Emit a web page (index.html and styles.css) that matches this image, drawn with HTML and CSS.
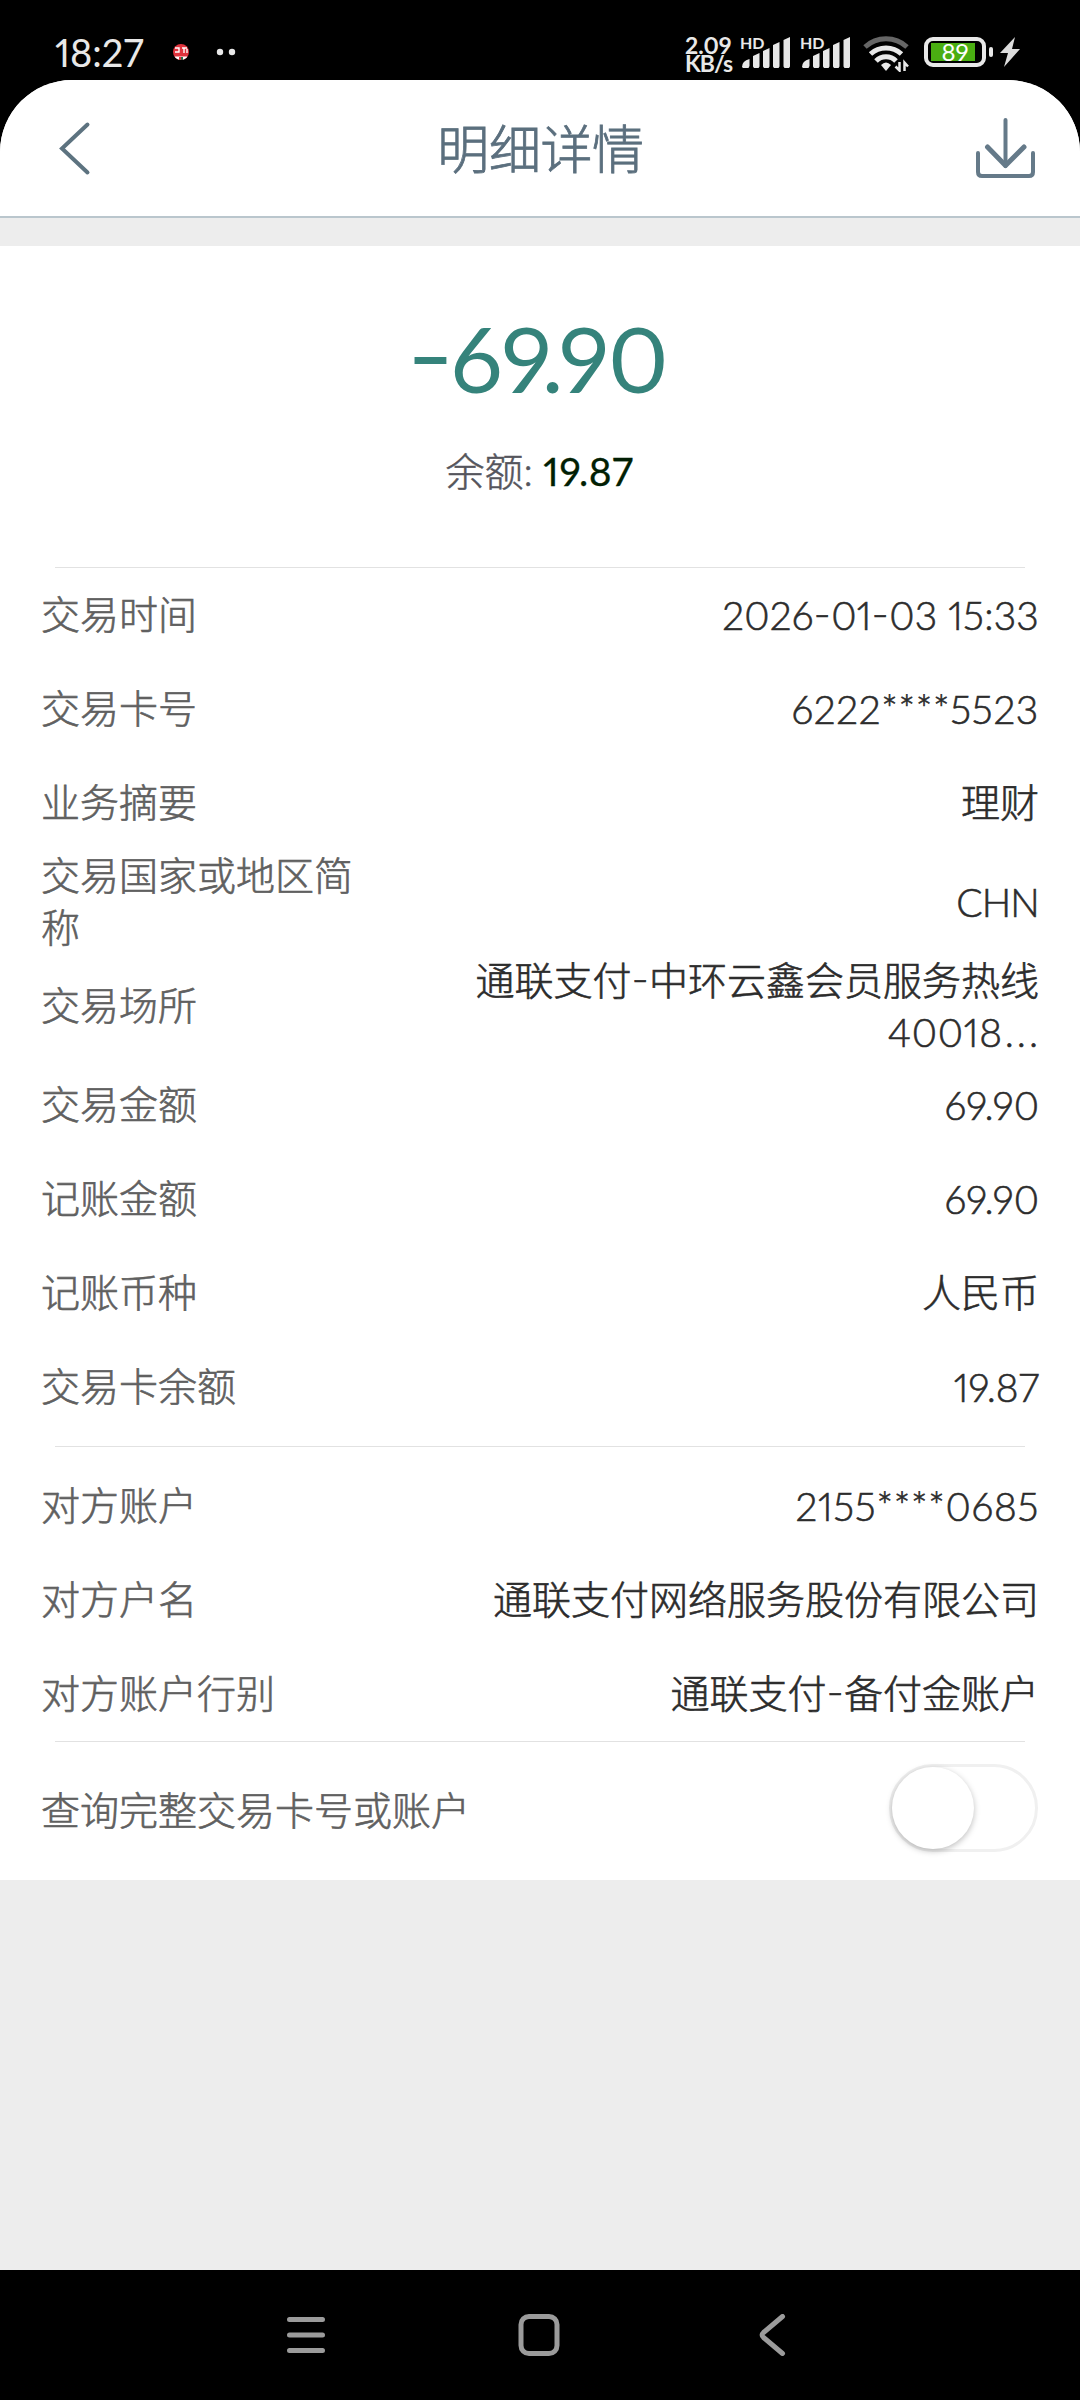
FILE: index.html
```html
<!DOCTYPE html>
<html lang="zh-CN">
<head>
<meta charset="utf-8">
<title>明细详情</title>
<link rel="stylesheet" href="styles.css">
</head>
<body>
<div class="status">
  <div class="status-left">
    <span class="clock">18:27</span>
    <svg class="notices" width="70" height="24" viewBox="0 0 70 24">
      <circle cx="12" cy="12" r="8" fill="#e0323c"/>
      <path d="M6 8h4v4H6M13 8h5M15 8v5M18 9v4" fill="none" stroke="#fff" stroke-width="1.4"/>
      <path d="M5.500 16.500a8 8 0 0 0 13 0z" fill="#fff"/>
      <path d="M10 17h2v3h-2z" fill="#e0323c"/><path d="M12 17h2v3h-2z" fill="#2d6b4c"/>
      <circle cx="51" cy="12" r="3.200" fill="#e8e8e8"/><circle cx="63" cy="12" r="3.200" fill="#e8e8e8"/>
    </svg>
  </div>
  <div class="status-right">
    <div class="speed"><span>2.09</span><span class="unit">KB/s</span></div>
    <div class="signal"><span class="hd">HD</span>
      <svg width="50" height="32" viewBox="0 0 50 32" fill="#e8e8e8"><path d="M2 31q0-6 7.500-8v7l-1 2H3zM13 20l6.500-3v13.500l-1 1.500h-4.500l-1-1.500zM23 15l6.500-3v18.500l-1 1.500h-4.500l-1-1.500zM33 9l6.500-3v24.500l-1 1.500h-4.500l-1-1.500zM43.500 4l6.500-3v29.500l-1 1.500h-4.500l-1-1.500z"/></svg>
    </div>
    <div class="signal"><span class="hd">HD</span>
      <svg width="50" height="32" viewBox="0 0 50 32" fill="#e8e8e8"><path d="M2 31q0-6 7.500-8v7l-1 2H3zM13 20l6.500-3v13.500l-1 1.500h-4.500l-1-1.500zM23 15l6.500-3v18.500l-1 1.500h-4.500l-1-1.500zM33 9l6.500-3v24.500l-1 1.500h-4.500l-1-1.500zM43.500 4l6.500-3v29.500l-1 1.500h-4.500l-1-1.500z"/></svg>
    </div>
    <svg class="wifi" width="46" height="36" viewBox="0 0 46 36" fill="none" stroke-width="5">
      <path d="M2 11a31 31 0 0 1 42 0" stroke="#666"/>
      <path d="M7.500 18a23 23 0 0 1 31 0" stroke="#e8e8e8"/>
      <path d="M13 25a14 14 0 0 1 20 0" stroke="#e8e8e8"/>
      <path d="M18 29q5-5 10 0l-5 6z" fill="#e8e8e8"/>
      <path d="M36.500 26v8.500l-4-4M41.500 35v-8.500l3.500 4" stroke="#e8e8e8" stroke-width="2.500"/>
    </svg>
    <div class="battery"><span class="level">89</span></div>
    <svg class="bolt" width="20" height="30" viewBox="0 0 20 30"><path d="M15 0 0 16h8L4 30 20 12h-8z" fill="#dcdcdc"/></svg>
  </div>
</div>
<main class="app">
  <header class="bar">
    <svg class="back" width="34" height="56" viewBox="0 0 34 56"><path d="M29.500 4.500 4 28.500l25.500 24" fill="none" stroke="#5d7380" stroke-width="4" stroke-linecap="round"/></svg>
    <h1 class="title">明细详情</h1>
    <svg class="save" width="64" height="64" viewBox="0 0 64 64" fill="none" stroke="#657a89" stroke-linecap="round" stroke-linejoin="round"><path d="M4 37v19q0 4 4 4h47q4 0 4-4V37M31.500 4v46" stroke-width="4"/><path d="M13.500 31l18 18.500L50 31" stroke-width="5"/></svg>
  </header>
  <section class="sheet">
    <div class="summary">
      <div class="amount"><span class="minus">-</span>6<span class="tight">9.</span>90</div>
      <div class="balance">余额: <span class="balance-num">19.87</span></div>
    </div>
    <div class="group first">
      <div class="row"><span class="label">交易时间</span><span class="value num">2026<span class="dash">-</span>01<span class="dash">-</span>03 15:33</span></div>
      <div class="row"><span class="label">交易卡号</span><span class="value card">6222****5523</span></div>
      <div class="row"><span class="label">业务摘要</span><span class="value han">理财</span></div>
      <div class="row two"><span class="label">交易国家或地区简称</span><span class="value code">CHN</span></div>
      <div class="row two"><span class="label">交易场所</span><span class="value">通联支付<span class="dash">-</span>中环云鑫会员服务热线<br><span class="card">40018</span><span class="dots">...</span></span></div>
      <div class="row"><span class="label">交易金额</span><span class="value">69.90</span></div>
      <div class="row"><span class="label">记账金额</span><span class="value">69.90</span></div>
      <div class="row"><span class="label">记账币种</span><span class="value han">人民币</span></div>
      <div class="row"><span class="label">交易卡余额</span><span class="value">19.87</span></div>
    </div>
    <div class="group second">
      <div class="row"><span class="label">对方账户</span><span class="value card">2155****0685</span></div>
      <div class="row"><span class="label">对方户名</span><span class="value han">通联支付网络服务股份有限公司</span></div>
      <div class="row"><span class="label">对方账户行别</span><span class="value han">通联支付<span class="dash">-</span>备付金账户</span></div>
    </div>
    <div class="group query">
      <span class="label wide">查询完整交易卡号或账户</span>
      <span class="toggle"><span class="thumb"></span></span>
    </div>
  </section>
</main>
<nav class="nav">
  <svg width="40" height="42" viewBox="0 0 40 42" stroke="#9b9b9b" stroke-width="5" stroke-linecap="round"><path d="M3.500 5.500h33M3.500 21h33M3.500 36.500h33"/></svg>
  <svg class="home" width="42" height="42" viewBox="0 0 42 42"><rect x="3" y="2.500" width="36" height="37" rx="8" fill="none" stroke="#9b9b9b" stroke-width="5"/></svg>
  <svg width="30" height="42" viewBox="0 0 30 42"><path d="M24.500 2.500 5.500 18.500q-2.800 2.500 0 5l19 16" fill="none" stroke="#9b9b9b" stroke-width="5" stroke-linecap="round"/></svg>
</nav>
</body>
</html>
```
FILE: styles.css
```css
* { box-sizing: border-box; }
body { margin: 0; width: 1080px; height: 2400px; background: #000; display: flex; flex-direction: column; overflow: hidden; font-family: Lato, "Noto Sans CJK SC", sans-serif; font-feature-settings: "pnum"; font-weight: 400; }
svg { display: block; flex: none; }

.status { height: 80px; flex: none; display: flex; justify-content: space-between; color: #e8e8e8; padding: 0 60px 0 55px; }
.status-left { display: flex; align-items: center; padding-top: 24px; height: 80px; }
.clock { font-size: 38px; line-height: 40px; }
.notices { margin-left: 25px; }
.status-right { display: flex; align-items: flex-start; padding-top: 36px; }
.speed { display: flex; flex-direction: column; font-size: 23px; font-weight: 700; line-height: 18px; width: 55px; }
.unit { letter-spacing: -0.9px; }
.signal { position: relative; width: 60px; height: 32px; }
.hd { position: absolute; left: 0; top: 0; font-size: 16px; line-height: 13px; font-weight: 700; }
.wifi { margin: 0 15px 0 3px; }
.battery { position: relative; width: 62px; height: 30px; border: 4px solid #e8e8e8; border-radius: 9px; margin: 1px 14px 0 0; padding: 2px 3px; }
.battery::after { content: ""; position: absolute; left: 61px; top: 6px; width: 4px; height: 10px; border-radius: 2px; background: #e8e8e8; }
.level { display: block; width: 44px; height: 18px; background: #4aae12; font-size: 24px; line-height: 18px; padding-left: 4px; text-align: center; color: #fff; }
.bolt { margin-top: 1px; }

.app { flex: 1; background: #ededed; border-radius: 72px 72px 0 0; overflow: hidden; }
.bar { height: 138px; background: #fff; border-bottom: 2px solid #bac6cd; display: flex; align-items: center; justify-content: space-between; padding: 0 42px 0 58px; }
.title { margin: 2px 0 0 15px; font-size: 52px; letter-spacing: -0.4px; font-weight: 300; line-height: 60px; color: #5b6f7e; -webkit-text-stroke: 0.8px #5b6f7e; }
.sheet { margin-top: 28px; background: #fff; height: 1634px; }
.summary { height: 321px; display: flex; flex-direction: column; align-items: center; padding-top: 57px; }
.amount { font-size: 92px; line-height: 110px; color: #35837b; letter-spacing: -1.2px; }
.minus { display: inline-block; transform: translate(0, -5px) scaleX(1.4); margin-right: 5px; }
.tight { letter-spacing: -4.5px; }
.balance { margin: 32px 0 0 -1px; font-size: 39px; line-height: 52px; font-weight: 300; color: #55555c; -webkit-text-stroke: 0.5px #55555c; }
.balance-num { color: #021f04; font-weight: 400; letter-spacing: 0.6px; -webkit-text-stroke: 0.3px #021f04; }

.group { padding: 0 41px; position: relative; }
.group::before { content: ""; position: absolute; left: 55px; right: 55px; top: 0; height: 1px; background: #e2e2e2; }
.first { padding-top: 1px; padding-bottom: 12px; height: 879px; }
.second { padding-top: 13px; height: 295px; }
.row { height: 94px; display: flex; align-items: center; justify-content: space-between; }
.two { height: 104px; }
.label { width: 313px; margin-top: -2px; font-size: 39px; line-height: 52px; font-weight: 300; color: #606060; -webkit-text-stroke: 0.6px #606060; }
.wide { width: auto; }
.value { margin-top: -1px; font-size: 39px; line-height: 52px; font-weight: 300; color: #2c2c2c; text-align: right; -webkit-text-stroke: 0.6px #2c2c2c; }
.han { margin-top: -3px; }
.num { letter-spacing: 0.2px; }
.card { letter-spacing: 0.7px; }
.code { letter-spacing: -0.8px; }
.dots { letter-spacing: 3px; margin: 0 -2px 0 2px; }
.dash { display: inline-block; transform: translateY(-2px) scaleX(1.2); margin: 0 1.5px; }
.query { height: 139px; display: flex; align-items: center; justify-content: space-between; }
.toggle { width: 149px; height: 88px; border: 3px solid #f0f0f0; border-radius: 44px; margin: -6px 1px 0 0; }
.thumb { display: block; width: 82px; height: 82px; border-radius: 50%; background: #fff; box-shadow: 0 2px 6px rgba(0,0,0,.26); }

.nav { height: 130px; flex: none; display: flex; justify-content: space-between; align-items: center; padding: 0 292px 0 286px; }
.home { margin-right: 7px; }
```
